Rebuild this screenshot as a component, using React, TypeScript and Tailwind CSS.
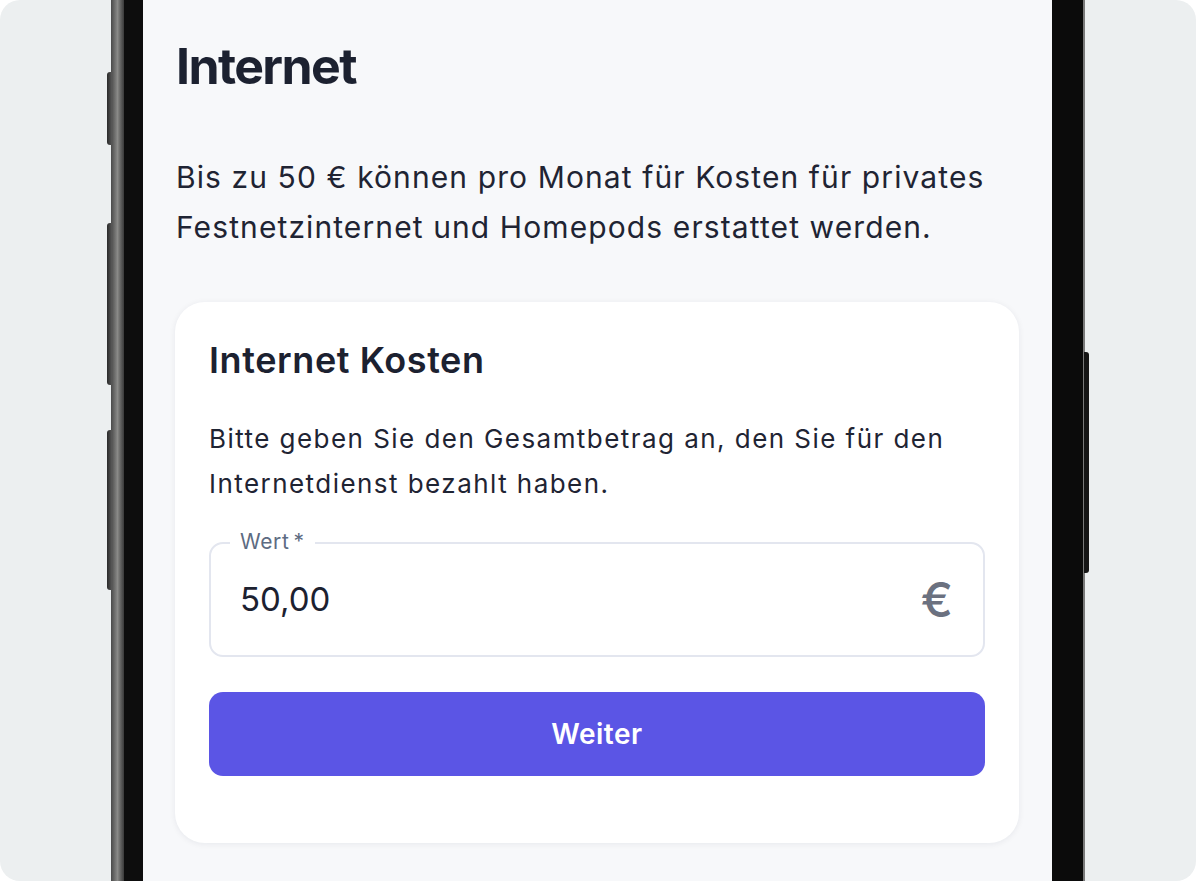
import React from "react";

export default function App() {
  return (
    <div className="w-[1196px] h-[881px] bg-white" style={{ fontFamily: "Inter, 'Noto Sans', sans-serif" }}>
      <div className="relative w-full h-full rounded-[20px] bg-[#eceff0] overflow-hidden flex">
        <div className="relative ml-[111px] h-full flex">
          {/* side buttons */}
          <div className="absolute left-[-4px] top-[72px] w-[5px] h-[73px] rounded-l-[3px] bg-gradient-to-r from-[#2a2a2a] to-[#5a5a5a]" />
          <div className="absolute left-[-4px] top-[223px] w-[5px] h-[162px] rounded-l-[3px] bg-gradient-to-r from-[#2a2a2a] to-[#5a5a5a]" />
          <div className="absolute left-[-4px] top-[430px] w-[5px] h-[160px] rounded-l-[3px] bg-gradient-to-r from-[#2a2a2a] to-[#5a5a5a]" />
          <div className="absolute right-[-4px] top-[352px] w-[5px] h-[221px] rounded-r-[3px] bg-[#151515]" />

          <div className="w-[13px] h-full bg-gradient-to-r from-[#4a4a4a] via-[#8a8a88] to-[#3a3a3a]" />
          <div className="w-[19px] h-full bg-[#0d0d0d]" />
          <div className="w-[909px] h-full bg-[#f7f8fa] pl-[33px] pr-[33px] pt-[36px]">
            <h1 className="text-[50px] leading-[60px] font-bold text-[#1c2130] tracking-[-1.6px]">Internet</h1>
            <p className="mt-[56px] text-[30px] leading-[50px] text-[#1f2433] tracking-[1.1px] whitespace-nowrap">
              Bis zu 50 € können pro Monat für Kosten für privates
              <br />
              Festnetzinternet und Homepods erstattet werden.
            </p>
            <div className="mt-[50px] -ml-[1px] w-[844px] bg-white rounded-[30px] shadow-[0_1px_6px_rgba(20,30,50,0.07)] px-[34px] pt-[36px] pb-[67px]">
              <h2 className="text-[36px] leading-[44px] font-semibold text-[#1c2130] tracking-[0.6px]">Internet Kosten</h2>
              <p className="mt-[34px] text-[26px] leading-[45px] text-[#1f2433] tracking-[1.45px] whitespace-nowrap">
                Bitte geben Sie den Gesamtbetrag an, den Sie für den
                <br />
                Internetdienst bezahlt haben.
              </p>
              <div className="relative mt-[36px] h-[115px] rounded-[14px] border-2 border-[#e3e6ef] flex items-center pl-[29px] pr-[30px]">
                <span className="absolute left-[19px] top-[-17px] bg-white px-[10px] text-[21px] leading-[30px] text-[#5d6b82] tracking-[0.6px]">
                  Wert<span className="ml-[4px]">*</span>
                </span>
                <span className="flex-1 text-[33px] text-[#1c2130]">50,00</span>
                <span className="text-[48px] leading-none font-medium text-[#6b7180]">€</span>
              </div>
              <button className="mt-[35px] w-full h-[84px] rounded-[14px] bg-[#5b55e5] text-white text-[28px] font-semibold tracking-[0.5px]">
                Weiter
              </button>
            </div>
          </div>
          <div className="w-[31px] h-full bg-[#0b0b0b]" />
          <div className="w-[2px] h-full bg-[#7a7a7a]" />
        </div>
      </div>
    </div>
  );
}
